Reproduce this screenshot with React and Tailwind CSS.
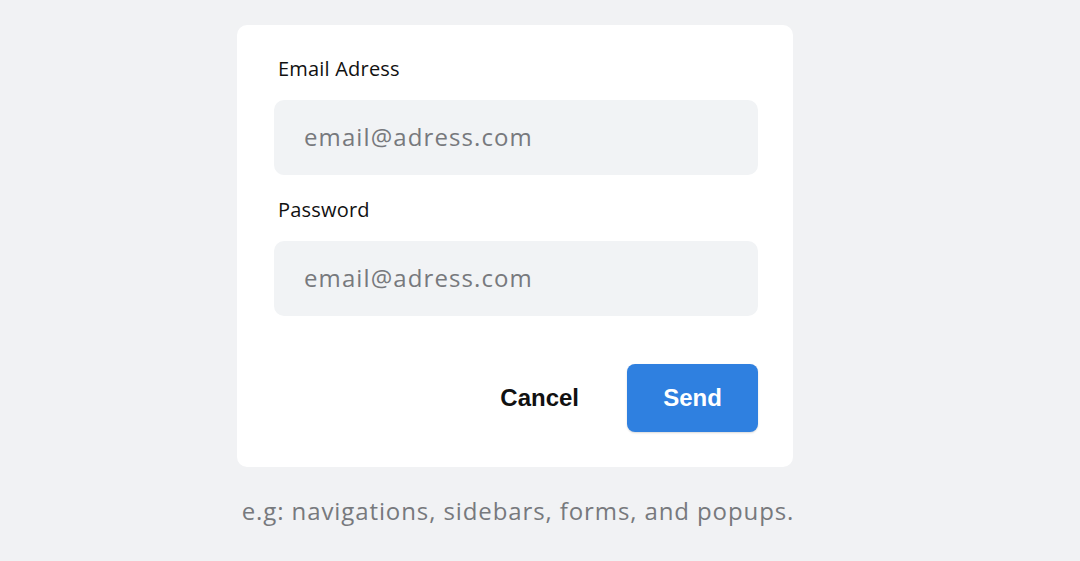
import React from "react";

const sans = "font-['Open_Sans','Noto_Sans',sans-serif]";

function Field({ label, type }) {
  return (
    <div>
      <label className={`block h-6 pl-1 text-[20px] leading-6 tracking-[0.2px] text-[#111] ${sans}`}>
        {label}
      </label>
      <input
        type={type}
        placeholder="email@adress.com"
        className={`mt-[19px] block h-[75px] w-full rounded-[10px] bg-[#f1f3f5] px-[30px] pb-[2px] text-[24px] tracking-[1.1px] text-[#333] outline-none placeholder:text-[#77797d] ${sans}`}
      />
    </div>
  );
}

export default function App() {
  return (
    <div className="min-h-[561px] w-full bg-[#f1f2f4] pt-[25px]">
      <div className="ml-[237px] w-[556px]">
        <div className="rounded-[10px] bg-white pb-[35px] pl-[37px] pr-[35px] pt-[32px]">
          <Field label="Email Adress" type="email" />
          <div className="mt-[23px]">
            <Field label="Password" type="password" />
          </div>
          <div className="mt-[48px] flex items-center justify-end">
            <button className="mr-[48px] font-['Liberation_Sans',Arial,sans-serif] text-[24px] font-bold text-[#111]">
              Cancel
            </button>
            <button className="h-[68px] w-[131px] rounded-[8px] bg-[#2f80e0] font-['Liberation_Sans',Arial,sans-serif] text-[24px] font-bold text-white shadow-[0_1px_2px_rgba(0,0,0,0.15)]">
              Send
            </button>
          </div>
        </div>
        <p className={`ml-[3px] mt-[28px] w-[556px] whitespace-nowrap text-center text-[24px] leading-8 tracking-[0.9px] text-[#77797d] ${sans}`}>
          e.g: navigations, sidebars, forms, and popups.
        </p>
      </div>
    </div>
  );
}
